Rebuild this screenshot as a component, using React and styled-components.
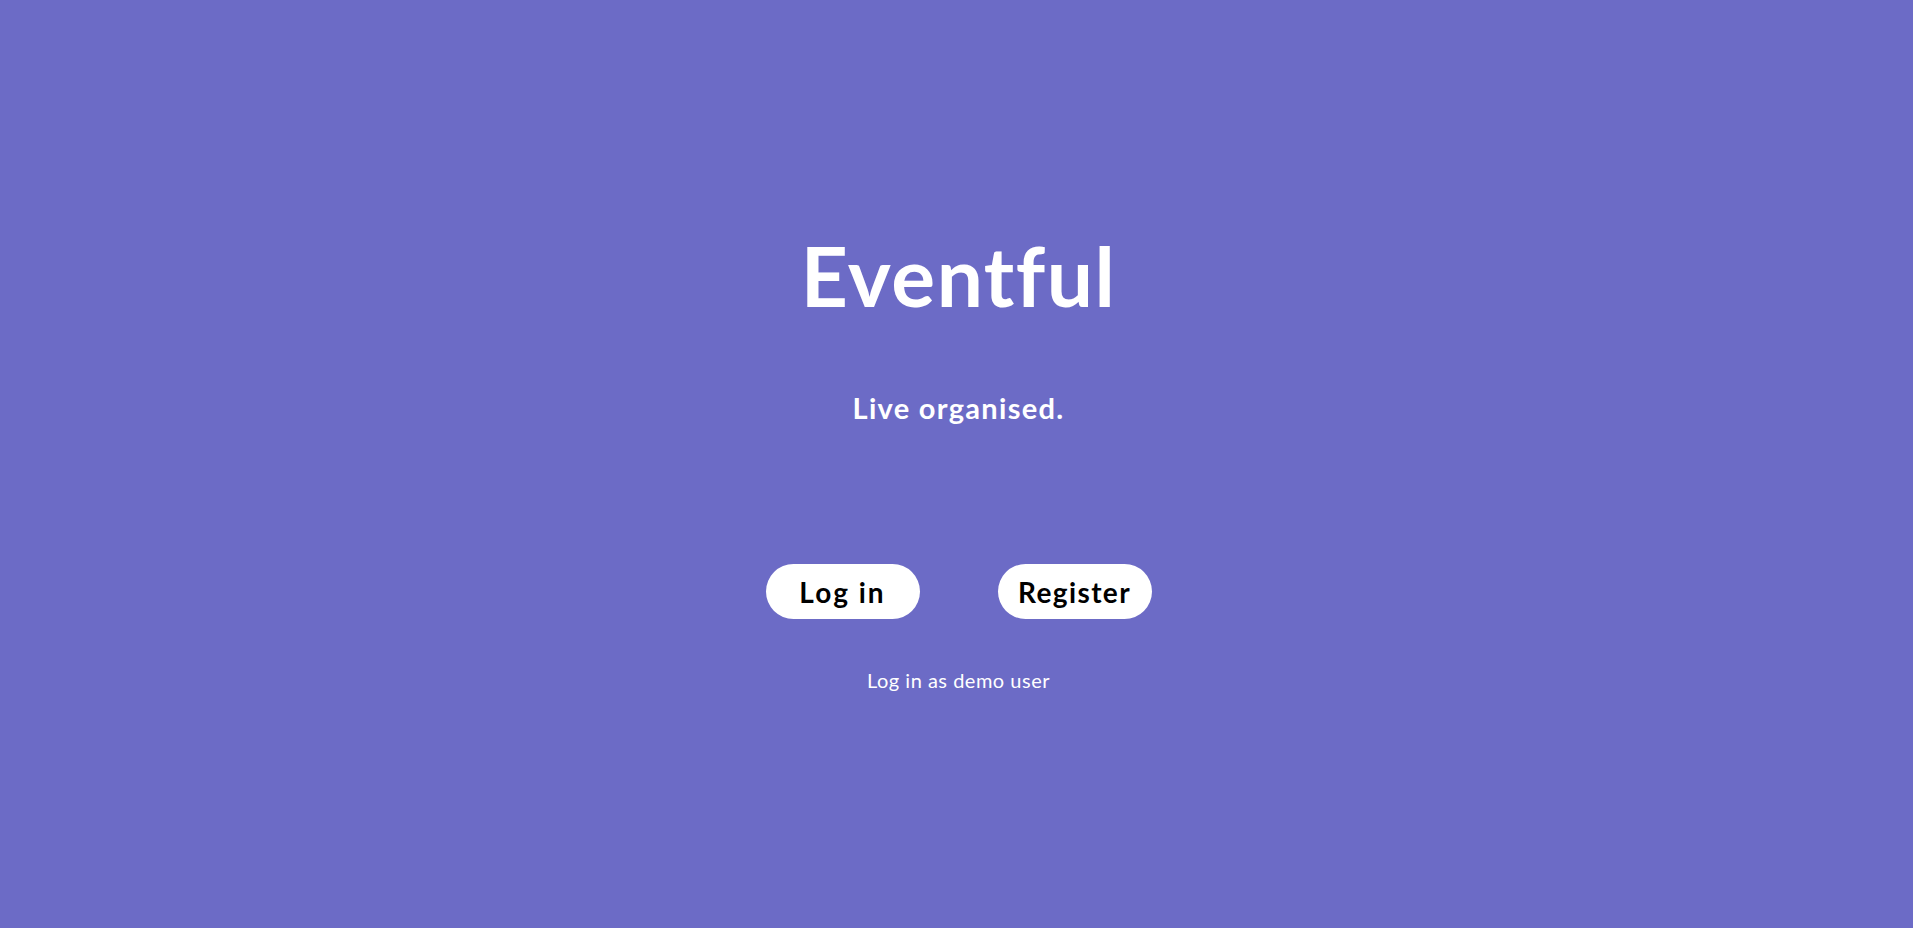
import React from "react";
import styled, { createGlobalStyle } from "styled-components";

const Global = createGlobalStyle`
  html, body { margin: 0; padding: 0; background: #6c6bc6; }
  body { font-family: Lato, "Open Sans", sans-serif; }
`;

const Page = styled.main`
  min-height: 928px;
  background: #6c6bc6;
  display: flex;
  flex-direction: column;
  align-items: center;
  padding-top: 234px;
  box-sizing: border-box;
  color: #fff;
  padding-left: 4px;
`;

const Title = styled.h1`
  margin: 0;
  font-size: 82px;
  line-height: 1;
  font-weight: 700;
  letter-spacing: 1.5px;
`;

const Tagline = styled.p`
  margin: 77px 0 0;
  font-size: 29px;
  line-height: 1;
  font-weight: 700;
  letter-spacing: 1.3px;
`;

const Actions = styled.div`
  margin-top: 142px;
  display: flex;
  gap: 78px;
`;

const PillButton = styled.button`
  width: 154px;
  height: 55px;
  border: none;
  border-radius: 28px;
  background: #fff;
  color: #000;
  font-family: Lato, sans-serif;
  font-size: 28px;
  font-weight: 700;
  line-height: 1;
  letter-spacing: ${(p) => (p.$wide ? "2px" : "1.4px")};
  cursor: pointer;
  padding: 0;
`;

const DemoLink = styled.a`
  margin-top: 51px;
  font-size: 20px;
  line-height: 1;
  letter-spacing: 0.5px;
  color: #fff;
  text-decoration: none;
  cursor: pointer;
`;

export default function App() {
  return (
    <>
      <Global />
      <Page>
        <Title>Eventful</Title>
        <Tagline>Live organised.</Tagline>
        <Actions>
          <PillButton $wide>Log in</PillButton>
          <PillButton>Register</PillButton>
        </Actions>
        <DemoLink>Log in as demo user</DemoLink>
      </Page>
    </>
  );
}
